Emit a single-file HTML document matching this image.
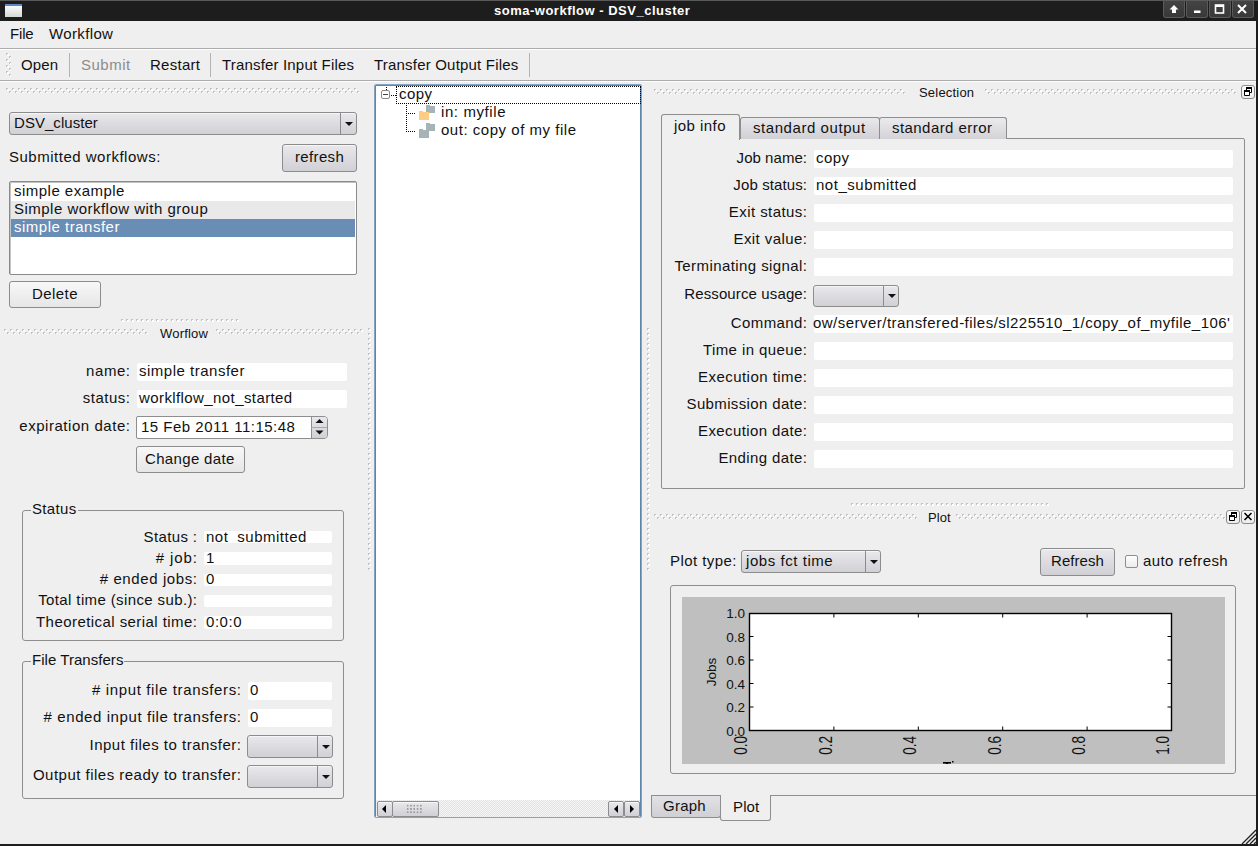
<!DOCTYPE html>
<html><head><meta charset="utf-8">
<style>
html,body{margin:0;padding:0;}
body{width:1258px;height:846px;position:relative;overflow:hidden;background:#efefef;font-family:"Liberation Sans",sans-serif;color:#111;}
.a{position:absolute;box-sizing:border-box;}
.t{position:absolute;font-size:15px;line-height:16px;white-space:nowrap;letter-spacing:0.4px;}
.r{text-align:right;}
.s{font-size:13px;letter-spacing:0.2px;}
.btn{position:absolute;box-sizing:border-box;border:1px solid #8c8c8c;border-radius:3px;background:linear-gradient(#e9e9ec,#d0d0d5);box-shadow:inset 0 1px #f6f6f8;}
.btnl{position:absolute;box-sizing:border-box;border:1px solid #8c8c8c;border-radius:3px;background:linear-gradient(#f8f8f8,#e6e6e6);}
.cb{position:absolute;box-sizing:border-box;border:1px solid #8c8c8c;border-radius:3px;background:linear-gradient(#e9e9ec,#d0d0d5);box-shadow:inset 0 1px #f6f6f8;}
.cb .sep{position:absolute;top:0;bottom:0;width:1px;background:#8c8c8c;}
.cb .arr{position:absolute;width:0;height:0;border-left:4px solid transparent;border-right:4px solid transparent;border-top:4px solid #111;}
.fld{position:absolute;background:#fff;border-radius:2px;}
.dots{position:absolute;height:5px;background-image:conic-gradient(at 1px 1px,transparent 0 270deg,#fff 270deg),conic-gradient(at 1px 1px,transparent 0 270deg,#fff 270deg),conic-gradient(at 2px 2px,transparent 0 270deg,#c2c2c2 270deg),conic-gradient(at 2px 2px,transparent 0 270deg,#c2c2c2 270deg),conic-gradient(at 2px 2px,transparent 0 270deg,#fff 270deg),conic-gradient(at 2px 2px,transparent 0 270deg,#fff 270deg);background-size:6px 6px;background-position:1px 1px,4px 4px,0 0,3px 3px,1px 1px,4px 4px;}
.vdots{position:absolute;width:5px;background-image:conic-gradient(at 1px 1px,transparent 0 270deg,#fff 270deg),conic-gradient(at 1px 1px,transparent 0 270deg,#fff 270deg),conic-gradient(at 2px 2px,transparent 0 270deg,#c2c2c2 270deg),conic-gradient(at 2px 2px,transparent 0 270deg,#c2c2c2 270deg),conic-gradient(at 2px 2px,transparent 0 270deg,#fff 270deg),conic-gradient(at 2px 2px,transparent 0 270deg,#fff 270deg);background-size:6px 6px;background-position:1px 1px,4px 4px,0 0,3px 3px,1px 1px,4px 4px;}
.d1{position:absolute;height:3px;background-image:conic-gradient(at 1px 1px,transparent 0 270deg,#fff 270deg),conic-gradient(at 2px 2px,transparent 0 270deg,#c2c2c2 270deg),conic-gradient(at 2px 2px,transparent 0 270deg,#fff 270deg);background-size:5px 5px;background-position:1px 1px,0 0,1px 1px;}
.vd1{position:absolute;width:3px;background-image:conic-gradient(at 1px 1px,transparent 0 270deg,#fff 270deg),conic-gradient(at 2px 2px,transparent 0 270deg,#c2c2c2 270deg),conic-gradient(at 2px 2px,transparent 0 270deg,#fff 270deg);background-size:5px 5px;background-position:1px 1px,0 0,1px 1px;}
.grp{position:absolute;box-sizing:border-box;border:1px solid #8e8e8e;border-radius:3px;}
.grpt{position:absolute;background:#efefef;padding:0 1px;}
</style></head><body>

<!-- title bar -->
<div class="a" style="left:0;top:0;width:1258px;height:21px;background:#1d1d1d;border-top:1px solid #5a5a5a;"></div>
<div class="a" style="left:5px;top:4px;width:17px;height:13px;background:linear-gradient(#fafafa,#d6d8d6);border-top:2px solid #5f87c0;"></div>
<div class="t" style="left:494px;top:3px;color:#fff;font-weight:bold;font-size:13px;letter-spacing:0.503px;">soma-workflow - DSV_cluster</div>

<div class="a" style="left:1163px;top:1px;width:22px;height:17px;border:1px solid #5a5a5a;border-top:none;border-radius:0 0 3px 3px;background:linear-gradient(#444,#383838);"></div>
<div class="a" style="left:1186px;top:1px;width:22px;height:17px;border:1px solid #5a5a5a;border-top:none;border-radius:0 0 3px 3px;background:linear-gradient(#444,#383838);"></div>
<div class="a" style="left:1209px;top:1px;width:22px;height:17px;border:1px solid #5a5a5a;border-top:none;border-radius:0 0 3px 3px;background:linear-gradient(#444,#383838);"></div>
<div class="a" style="left:1232px;top:1px;width:22px;height:17px;border:1px solid #5a5a5a;border-top:none;border-radius:0 0 3px 3px;background:linear-gradient(#444,#383838);"></div>
<svg class="a" style="left:1163px;top:0;" width="92" height="20" viewBox="0 0 92 20">
 <path d="M11 5 L15.5 9.5 L13 9.5 L13 13 L9 13 L9 9.5 L6.5 9.5 Z" fill="#fff"/>
 <rect x="31" y="10.5" width="6.5" height="2.5" fill="#fff"/>
 <rect x="52.5" y="5" width="8" height="8" fill="none" stroke="#fff" stroke-width="1.6"/>
 <rect x="52.5" y="5" width="8" height="2" fill="#fff"/>
 <path d="M75 5 L83 13 M83 5 L75 13" stroke="#fff" stroke-width="2"/>
</svg>

<!-- window frame -->
<div class="a" style="left:1256px;top:21px;width:2px;height:825px;background:#1d1d1d;"></div>
<div class="a" style="left:0;top:844px;width:1258px;height:2px;background:#1d1d1d;"></div>

<!-- menu bar -->
<div class="t" style="left:10px;top:26px;letter-spacing:-0.184px;">File</div>
<div class="t" style="left:49px;top:26px;letter-spacing:0.359px;">Workflow</div>
<div class="a" style="left:0;top:48px;width:1256px;height:1px;background:#acacac;"></div><div class="a" style="left:0;top:49px;width:1256px;height:1px;background:#fff;"></div>

<!-- toolbar -->
<div class="vdots" style="left:6px;top:53px;height:24px;"></div>
<div class="t" style="left:21px;top:57px;letter-spacing:0.172px;">Open</div>
<div class="a" style="left:69px;top:53px;width:1px;height:24px;background:#b4b4b4;"></div>
<div class="t" style="left:81px;top:57px;color:#8c8c8c;letter-spacing:0.497px;">Submit</div>
<div class="t" style="left:150px;top:57px;letter-spacing:0.279px;">Restart</div>
<div class="a" style="left:210px;top:53px;width:1px;height:24px;background:#b4b4b4;"></div>
<div class="t" style="left:222px;top:57px;letter-spacing:0.173px;">Transfer Input Files</div>
<div class="t" style="left:374px;top:57px;letter-spacing:0.199px;">Transfer Output Files</div>
<div class="a" style="left:529px;top:53px;width:1px;height:24px;background:#b4b4b4;"></div>
<div class="a" style="left:0;top:80px;width:1256px;height:1px;background:#acacac;"></div><div class="a" style="left:0;top:81px;width:1256px;height:1px;background:#fff;"></div>

<!-- LEFT DOCK -->
<div class="dots" style="left:6px;top:88px;width:354px;"></div>
<div class="cb" style="left:9px;top:112px;width:348px;height:23px;"><div class="sep" style="left:330px;"></div><div class="arr" style="left:335px;top:9px;"></div></div>
<div class="t" style="left:14px;top:115px;letter-spacing:0.045px;">DSV_cluster</div>
<div class="t" style="left:9px;top:149px;letter-spacing:0.505px;">Submitted workflows:</div>
<div class="btn" style="left:282px;top:144px;width:75px;height:28px;"></div>
<div class="t" style="left:295px;top:149px;letter-spacing:0.355px;">refresh</div>
<div class="a" style="left:9px;top:181px;width:348px;height:94px;border:1px solid #8a8a8a;box-shadow:inset 1px 1px #c4c4c4;border-radius:2px;background:#fff;"></div>
<div class="a" style="left:11px;top:201px;width:344px;height:18px;background:#e9e9e9;"></div>
<div class="a" style="left:11px;top:219px;width:344px;height:18px;background:#6a8db5;"></div>
<div class="t" style="left:14px;top:183px;letter-spacing:0.479px;">simple example</div>
<div class="t" style="left:14px;top:201px;letter-spacing:0.480px;">Simple workflow with group</div>
<div class="t" style="left:14px;top:219px;color:#fff;letter-spacing:0.503px;">simple transfer</div>
<div class="btnl" style="left:9px;top:281px;width:92px;height:27px;"></div>
<div class="t" style="left:32px;top:286px;letter-spacing:0.438px;">Delete</div>

<div class="d1" style="left:121px;top:319px;width:118px;"></div>
<div class="dots" style="left:4px;top:329px;width:144px;"></div>
<div class="t s" style="left:160px;top:326px;letter-spacing:0.205px;">Worflow</div>
<div class="dots" style="left:216px;top:329px;width:147px;"></div>
<div class="vd1" style="left:368px;top:328px;height:242px;"></div>

<div class="t r" style="right:1128px;top:363px;letter-spacing:0.544px;margin-right:-0.544px;">name:</div>
<div class="fld" style="left:137px;top:363px;width:210px;height:18px;"></div>
<div class="t" style="left:139px;top:363px;letter-spacing:0.503px;">simple transfer</div>
<div class="t r" style="right:1128px;top:390px;letter-spacing:0.504px;margin-right:-0.504px;">status:</div>
<div class="fld" style="left:137px;top:390px;width:210px;height:18px;"></div>
<div class="t" style="left:139px;top:390px;letter-spacing:0.406px;">worklflow_not_started</div>
<div class="t r" style="right:1128px;top:418px;letter-spacing:0.544px;margin-right:-0.544px;">expiration date:</div>
<div class="a" style="left:136px;top:416px;width:192px;height:23px;border:1px solid #8e8e8e;border-radius:2px 4px 4px 2px;background:#fff;"></div>
<div class="a" style="left:311px;top:417px;width:16px;height:21px;border-left:1px solid #8e8e8e;border-radius:0 3px 3px 0;background:linear-gradient(#e9e9ec,#d0d0d5);"></div>
<div class="a" style="left:311px;top:427px;width:16px;height:1px;background:#a8a8a8;"></div>
<svg class="a" style="left:312px;top:417px;" width="15" height="21"><path d="M3.5 6 L7.5 2 L11.5 6 Z M3.5 13.5 L7.5 17.5 L11.5 13.5 Z" fill="#111"/></svg>
<div class="t" style="left:141px;top:419px;letter-spacing:0.492px;">15 Feb 2011 11:15:48</div>
<div class="btnl" style="left:136px;top:446px;width:109px;height:27px;"></div>
<div class="t" style="left:145px;top:451px;letter-spacing:0.337px;">Change date</div>

<!-- Status group -->
<div class="grp" style="left:22px;top:510px;width:322px;height:131px;"></div>
<div class="t grpt" style="left:31px;top:501px;letter-spacing:0.346px;">Status</div>
<div class="t r" style="right:1061px;top:529px;letter-spacing:0.363px;margin-right:-0.363px;">Status :</div>
<div class="fld" style="left:204px;top:531px;width:128px;height:12px;"></div>
<div class="t" style="left:206px;top:529px;height:14px;overflow:hidden;letter-spacing:0.518px;">not_submitted</div>
<div class="t r" style="right:1061px;top:550px;letter-spacing:0.924px;margin-right:-0.924px;"># job:</div>
<div class="fld" style="left:204px;top:552px;width:128px;height:13px;"></div>
<div class="t" style="left:206px;top:550px;letter-spacing:0.562px;">1</div>
<div class="t r" style="right:1061px;top:571px;letter-spacing:0.599px;margin-right:-0.599px;"># ended jobs:</div>
<div class="fld" style="left:204px;top:574px;width:128px;height:12px;"></div>
<div class="t" style="left:206px;top:571px;letter-spacing:0.562px;">0</div>
<div class="t r" style="right:1061px;top:592px;letter-spacing:0.380px;margin-right:-0.380px;">Total time (since sub.):</div>
<div class="fld" style="left:204px;top:595px;width:128px;height:12px;"></div>
<div class="t r" style="right:1061px;top:614px;letter-spacing:0.439px;margin-right:-0.439px;">Theoretical serial time:</div>
<div class="fld" style="left:204px;top:616px;width:128px;height:13px;"></div>
<div class="t" style="left:206px;top:614px;letter-spacing:0.556px;">0:0:0</div>

<!-- File transfers group -->
<div class="grp" style="left:22px;top:661px;width:322px;height:138px;"></div>
<div class="t grpt" style="left:31px;top:652px;letter-spacing:0.041px;">File Transfers</div>
<div class="t r" style="right:1017px;top:682px;letter-spacing:0.635px;margin-right:-0.635px;"># input file transfers:</div>
<div class="fld" style="left:248px;top:682px;width:84px;height:18px;"></div>
<div class="t" style="left:250px;top:682px;letter-spacing:0.562px;">0</div>
<div class="t r" style="right:1017px;top:709px;letter-spacing:0.587px;margin-right:-0.587px;"># ended input file transfers:</div>
<div class="fld" style="left:248px;top:709px;width:84px;height:18px;"></div>
<div class="t" style="left:250px;top:709px;letter-spacing:0.562px;">0</div>
<div class="t r" style="right:1017px;top:737px;letter-spacing:0.495px;margin-right:-0.495px;">Input files to transfer:</div>
<div class="cb" style="left:247px;top:735px;width:86px;height:23px;"><div class="sep" style="left:69px;"></div><div class="arr" style="left:74px;top:9px;"></div></div>
<div class="t r" style="right:1017px;top:767px;letter-spacing:0.488px;margin-right:-0.488px;">Output files ready to transfer:</div>
<div class="cb" style="left:247px;top:765px;width:86px;height:23px;"><div class="sep" style="left:69px;"></div><div class="arr" style="left:74px;top:9px;"></div></div>

<!-- TREE VIEW -->
<div class="a" style="left:374px;top:84px;width:268px;height:734px;border:1px solid #86a4c4;box-shadow:inset 0 0 0 1px #5f84ab;border-radius:2px;background:#fff;"></div>
<div class="a" style="left:381px;top:90px;width:9px;height:9px;border:1px solid #8a8a8a;border-radius:2px;background:#fff;"></div>
<div class="a" style="left:383px;top:94px;width:5px;height:1px;background:#444;"></div>
<div class="a" style="left:386px;top:87px;width:1px;height:3px;background:repeating-linear-gradient(#000 0 1px,transparent 1px 2px);"></div>
<div class="a" style="left:391px;top:95px;width:5px;height:1px;background:repeating-linear-gradient(90deg,#000 0 1px,transparent 1px 2px);"></div>
<div class="a" style="left:396px;top:86px;width:245px;height:18px;border:1px dotted #000;"></div>
<div class="a" style="left:406px;top:105px;width:1px;height:27px;background:repeating-linear-gradient(#000 0 1px,transparent 1px 2px);"></div>
<div class="a" style="left:408px;top:113px;width:7px;height:1px;background:repeating-linear-gradient(90deg,#000 0 1px,transparent 1px 2px);"></div>
<div class="a" style="left:408px;top:131px;width:7px;height:1px;background:repeating-linear-gradient(90deg,#000 0 1px,transparent 1px 2px);"></div>
<svg class="a" style="left:418px;top:104px;" width="18" height="36">
 <rect x="8" y="2" width="9" height="7" fill="#a6b3b7"/><rect x="8" y="1" width="4" height="1" fill="#a6b3b7"/>
 <rect x="1" y="8" width="10" height="8" fill="#ffcc84"/><rect x="1" y="7" width="4" height="1" fill="#ffcc84"/>
 <rect x="8" y="20" width="9" height="7" fill="#a6b3b7"/><rect x="8" y="19" width="4" height="1" fill="#a6b3b7"/>
 <rect x="1" y="26" width="10" height="8" fill="#a6b3b7"/><rect x="1" y="25" width="4" height="1" fill="#a6b3b7"/>
</svg>
<div class="t" style="left:399px;top:86px;letter-spacing:0.438px;">copy</div>
<div class="t" style="left:441px;top:104px;letter-spacing:0.598px;">in: myfile</div>
<div class="t" style="left:441px;top:122px;letter-spacing:0.526px;">out: copy of my file</div>
<!-- scrollbar -->
<div class="a" style="left:376px;top:800px;width:264px;height:17px;background:#f4f4f4;background-image:conic-gradient(#e4e4e4 25%,transparent 0 50%,#e4e4e4 0 75%,transparent 0);background-size:2px 2px;"></div>
<div class="btn" style="left:377px;top:801px;width:16px;height:16px;border-radius:2px;"></div>
<div class="btn" style="left:392px;top:801px;width:47px;height:16px;border-radius:2px;"></div>
<div class="a" style="left:406px;top:804px;width:17px;height:10px;background-image:radial-gradient(circle,#9a9a9a 0.6px,transparent 0.8px);background-size:3.3px 3.3px;"></div>
<div class="btn" style="left:608px;top:801px;width:16px;height:16px;border-radius:2px;"></div>
<div class="btn" style="left:624px;top:801px;width:16px;height:16px;border-radius:2px;"></div>
<svg class="a" style="left:376px;top:800px;" width="265" height="18"><path d="M6 9 L10 5 L10 13 Z M238 9 L242 5 L242 13 Z M258 9 L254 5 L254 13 Z" fill="#000"/></svg>

<!-- RIGHT: Selection dock -->
<div class="dots" style="left:654px;top:89px;width:251px;"></div>
<div class="t s" style="left:919px;top:85px;letter-spacing:0.201px;">Selection</div>
<div class="dots" style="left:985px;top:89px;width:252px;"></div>
<div class="a" style="left:1241px;top:85px;width:14px;height:14px;border:1px solid #8a8a8a;border-radius:3px;background:linear-gradient(#fcfcfc,#ececec);"></div>
<svg class="a" style="left:1241px;top:85px;" width="14" height="14"><path d="M5.5 2.5 h5 v5 h-5 z" fill="#fff" stroke="#000" stroke-width="1"/><rect x="5" y="2" width="6" height="2" fill="#000"/><path d="M3.5 5.5 h5 v5 h-5 z" fill="#fff" stroke="#000" stroke-width="1"/><rect x="3" y="5" width="6" height="2" fill="#000"/></svg>

<!-- tabs -->
<div class="a" style="left:661px;top:138px;width:584px;height:351px;border:1px solid #8e8e8e;border-radius:2px;"></div>
<div class="a" style="left:740px;top:117px;width:140px;height:22px;border:1px solid #8e8e8e;border-bottom:none;border-radius:3px 3px 0 0;background:linear-gradient(#e9e9ec,#d0d0d5);"></div>
<div class="a" style="left:879px;top:117px;width:128px;height:22px;border:1px solid #8e8e8e;border-bottom:none;border-radius:3px 3px 0 0;background:linear-gradient(#ebebed,#d3d3d7);"></div>
<div class="a" style="left:661px;top:114px;width:79px;height:26px;border:1px solid #8e8e8e;border-bottom:none;border-radius:3px 3px 0 0;background:#efefef;"></div>
<div class="t" style="left:674px;top:118px;letter-spacing:0.459px;">job info</div>
<div class="t" style="left:753px;top:120px;letter-spacing:0.562px;">standard output</div>
<div class="t" style="left:892px;top:120px;letter-spacing:0.440px;">standard error</div>
<div class="t r" style="right:451px;top:150px;letter-spacing:0.043px;margin-right:-0.043px;">Job name:</div>
<div class="fld" style="left:814px;top:150px;width:419px;height:18px;"></div>
<div class="t" style="left:816px;top:150px;letter-spacing:0.438px;">copy</div>
<div class="t r" style="right:451px;top:177px;letter-spacing:0.109px;margin-right:-0.109px;">Job status:</div>
<div class="fld" style="left:814px;top:177px;width:419px;height:18px;"></div>
<div class="t" style="left:816px;top:177px;letter-spacing:0.518px;">not_submitted</div>
<div class="t r" style="right:451px;top:204px;letter-spacing:0.443px;margin-right:-0.443px;">Exit status:</div>
<div class="fld" style="left:814px;top:204px;width:419px;height:18px;"></div>
<div class="t r" style="right:451px;top:231px;letter-spacing:0.428px;margin-right:-0.428px;">Exit value:</div>
<div class="fld" style="left:814px;top:231px;width:419px;height:18px;"></div>
<div class="t r" style="right:451px;top:258px;letter-spacing:0.417px;margin-right:-0.417px;">Terminating signal:</div>
<div class="fld" style="left:814px;top:258px;width:419px;height:18px;"></div>
<div class="t r" style="right:451px;top:286px;letter-spacing:0.125px;margin-right:-0.125px;">Ressource usage:</div>
<div class="cb" style="left:813px;top:285px;width:86px;height:22px;"><div class="sep" style="left:69px;"></div><div class="arr" style="left:74px;top:8px;"></div></div>
<div class="t r" style="right:451px;top:315px;letter-spacing:0.414px;margin-right:-0.414px;">Command:</div>
<div class="fld" style="left:814px;top:315px;width:419px;height:18px;"></div>
<div class="t" style="left:813px;top:315px;letter-spacing:0.471px;">ow/server/transfered-files/sl225510_1/copy_of_myfile_106'</div>
<div class="t r" style="right:451px;top:342px;letter-spacing:0.416px;margin-right:-0.416px;">Time in queue:</div>
<div class="fld" style="left:814px;top:342px;width:419px;height:18px;"></div>
<div class="t r" style="right:451px;top:369px;letter-spacing:0.461px;margin-right:-0.461px;">Execution time:</div>
<div class="fld" style="left:814px;top:369px;width:419px;height:18px;"></div>
<div class="t r" style="right:451px;top:396px;letter-spacing:0.360px;margin-right:-0.360px;">Submission date:</div>
<div class="fld" style="left:814px;top:396px;width:419px;height:18px;"></div>
<div class="t r" style="right:451px;top:423px;letter-spacing:0.400px;margin-right:-0.400px;">Execution date:</div>
<div class="fld" style="left:814px;top:423px;width:419px;height:18px;"></div>
<div class="t r" style="right:451px;top:450px;letter-spacing:0.396px;margin-right:-0.396px;">Ending date:</div>
<div class="fld" style="left:814px;top:450px;width:419px;height:18px;"></div>

<!-- PLOT dock -->
<div class="vd1" style="left:647px;top:328px;height:242px;"></div>
<div class="d1" style="left:851px;top:503px;width:198px;"></div>
<div class="dots" style="left:654px;top:514px;width:263px;"></div>
<div class="t s" style="left:928px;top:510px;letter-spacing:0.051px;">Plot</div>
<div class="dots" style="left:956px;top:514px;width:269px;"></div>
<div class="a" style="left:1226px;top:510px;width:14px;height:14px;border:1px solid #8a8a8a;border-radius:3px;background:linear-gradient(#fcfcfc,#ececec);"></div>
<svg class="a" style="left:1226px;top:510px;" width="14" height="13"><path d="M5.5 2.5 h5 v5 h-5 z" fill="#fff" stroke="#000" stroke-width="1"/><rect x="5" y="2" width="6" height="2" fill="#000"/><path d="M3.5 5.5 h5 v5 h-5 z" fill="#fff" stroke="#000" stroke-width="1"/><rect x="3" y="5" width="6" height="2" fill="#000"/></svg>
<div class="a" style="left:1241px;top:510px;width:14px;height:14px;border:1px solid #8a8a8a;border-radius:3px;background:linear-gradient(#fcfcfc,#ececec);"></div>
<svg class="a" style="left:1241px;top:510px;" width="14" height="13"><path d="M3.5 3 L10.5 10 M10.5 3 L3.5 10" stroke="#000" stroke-width="1.6"/></svg>
<div class="t" style="left:670px;top:553px;letter-spacing:0.427px;">Plot type:</div>
<div class="cb" style="left:741px;top:550px;width:140px;height:23px;"><div class="sep" style="left:123px;"></div><div class="arr" style="left:128px;top:9px;"></div></div>
<div class="t" style="left:746px;top:553px;letter-spacing:0.556px;">jobs fct time</div>
<div class="btn" style="left:1040px;top:548px;width:75px;height:28px;"></div>
<div class="t" style="left:1051px;top:553px;letter-spacing:0.047px;">Refresh</div>
<div class="a" style="left:1125px;top:555px;width:13px;height:13px;border:1px solid #8e8e8e;border-radius:2px;background:linear-gradient(#fdfdfd,#ececec);"></div>
<div class="t" style="left:1143px;top:553px;letter-spacing:0.422px;">auto refresh</div>

<div class="a" style="left:670px;top:585px;width:566px;height:189px;border:1px solid #8e8e8e;border-radius:3px;"></div>
<div class="a" style="left:682px;top:597px;width:543px;height:167px;background:#bfbfbf;"></div>
<svg class="a" style="left:0;top:0;" width="1258" height="846" font-family="Liberation Sans" font-size="13.5">
<rect x="749.5" y="613.5" width="422" height="117" fill="#fff" stroke="#000" stroke-width="1.4"/>
<path d="M833.9 730.5 v-4 M833.9 613.5 v4" stroke="#000" stroke-width="1"/>
<path d="M918.3 730.5 v-4 M918.3 613.5 v4" stroke="#000" stroke-width="1"/>
<path d="M1002.7 730.5 v-4 M1002.7 613.5 v4" stroke="#000" stroke-width="1"/>
<path d="M1087.1 730.5 v-4 M1087.1 613.5 v4" stroke="#000" stroke-width="1"/>
<path d="M749.5 707.0 h4 M1171.5 707.0 h-4" stroke="#000" stroke-width="1"/>
<path d="M749.5 683.5 h4 M1171.5 683.5 h-4" stroke="#000" stroke-width="1"/>
<path d="M749.5 660.0 h4 M1171.5 660.0 h-4" stroke="#000" stroke-width="1"/>
<path d="M749.5 636.5 h4 M1171.5 636.5 h-4" stroke="#000" stroke-width="1"/>
<text x="745" y="735.5" text-anchor="end" fill="#111">0.0</text>
<text x="745" y="712.0" text-anchor="end" fill="#111">0.2</text>
<text x="745" y="688.5" text-anchor="end" fill="#111">0.4</text>
<text x="745" y="665.0" text-anchor="end" fill="#111">0.6</text>
<text x="745" y="641.5" text-anchor="end" fill="#111">0.8</text>
<text x="745" y="618.0" text-anchor="end" fill="#111">1.0</text>
<text transform="translate(747.3,736) rotate(-90) scale(1,1.35)" text-anchor="end" fill="#111">0.0</text>
<text transform="translate(831.7,736) rotate(-90) scale(1,1.35)" text-anchor="end" fill="#111">0.2</text>
<text transform="translate(916.1,736) rotate(-90) scale(1,1.35)" text-anchor="end" fill="#111">0.4</text>
<text transform="translate(1000.5,736) rotate(-90) scale(1,1.35)" text-anchor="end" fill="#111">0.6</text>
<text transform="translate(1084.9,736) rotate(-90) scale(1,1.35)" text-anchor="end" fill="#111">0.8</text>
<text transform="translate(1169.3,736) rotate(-90) scale(1,1.35)" text-anchor="end" fill="#111">1.0</text>
<text transform="translate(716,672) rotate(-90)" text-anchor="middle" fill="#111">Jobs</text>
<rect x="943" y="762" width="8" height="1.6" fill="#000"/><rect x="946" y="763" width="2" height="1" fill="#000"/><rect x="952" y="761" width="1.5" height="1.5" fill="#000"/>
</svg>

<!-- bottom tabs -->
<div class="a" style="left:770px;top:795px;width:486px;height:1px;background:#8e8e8e;"></div>
<div class="a" style="left:651px;top:796px;width:70px;height:22px;border:1px solid #8e8e8e;border-top:none;border-radius:0 0 3px 3px;background:linear-gradient(#e2e2e6,#d0d0d4);"></div>
<div class="a" style="left:651px;top:795px;width:70px;height:1px;background:#8e8e8e;"></div>
<div class="a" style="left:720px;top:795px;width:51px;height:26px;border:1px solid #8e8e8e;border-top:none;border-radius:0 0 3px 3px;background:#efefef;"></div>
<div class="t" style="left:663px;top:798px;letter-spacing:0.247px;">Graph</div>
<div class="t" style="left:733px;top:799px;letter-spacing:0.133px;">Plot</div>
<svg class="a" style="left:1240px;top:828px;" width="16" height="16"><path d="M2 16 L16 2 M6 16 L16 6 M10 16 L16 10 M14 16 L16 14" stroke="#222" stroke-width="1.3"/></svg>
</body></html>
